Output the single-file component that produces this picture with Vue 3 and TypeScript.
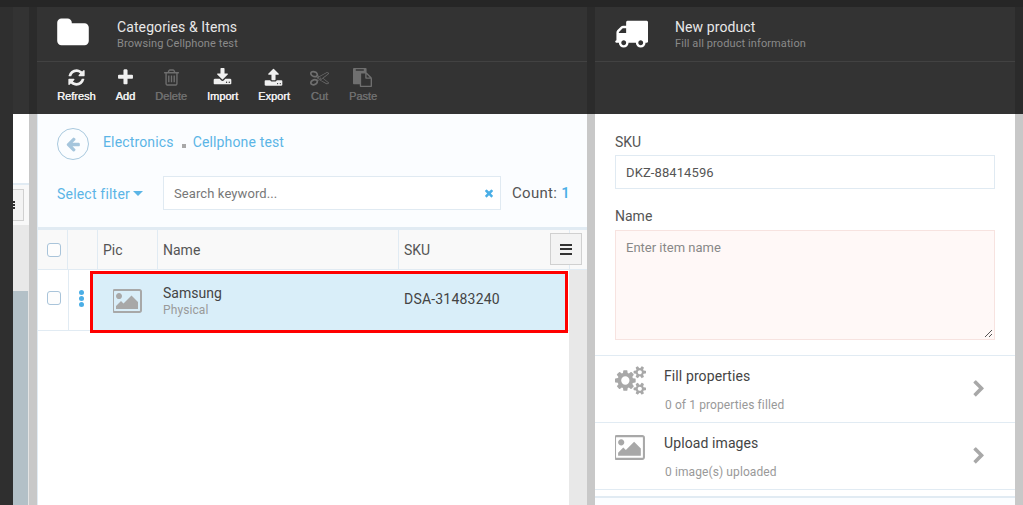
<script setup lang="ts">
const icons: Record<string, string> = {
  folder: 'M1728 608v704q0 92-66 158t-158 66h-1216q-92 0-158-66t-66-158v-960q0-92 66-158t158-66h320q92 0 158 66t66 158v32h672q92 0 158 66t66 158z',
  refresh: 'M1639 1056q0 5-1 7-64 268-268 434.5t-478 166.5q-146 0-282.5-55t-243.5-157l-129 129q-19 19-45 19t-45-19-19-45v-448q0-26 19-45t45-19h448q26 0 45 19t19 45-19 45l-137 137q71 66 161 102t187 36q134 0 250-65t186-179q11-17 53-117 8-23 30-23h192q13 0 22.5 9.5t9.5 22.5zm25-800v448q0 26-19 45t-45 19h-448q-26 0-45-19t-19-45 19-45l138-138q-148-137-349-137-134 0-250 65t-186 179q-11 17-53 117-8 23-30 23h-199q-13 0-22.5-9.5t-9.5-22.5v-7q65-268 270-434.5t480-166.5q146 0 284 55.5t245 156.5l130-129q19-19 45-19t45 19 19 45z',
  plus: 'M1600 736v192q0 40-28 68t-68 28h-416v416q0 40-28 68t-68 28h-192q-40 0-68-28t-28-68v-416h-416q-40 0-68-28t-28-68v-192q0-40 28-68t68-28h416v-416q0-40 28-68t68-28h192q40 0 68 28t28 68v416h416q40 0 68 28t28 68z',
  trash: 'M704 736v576q0 14-9 23t-23 9h-64q-14 0-23-9t-9-23v-576q0-14 9-23t23-9h64q14 0 23 9t9 23zm256 0v576q0 14-9 23t-23 9h-64q-14 0-23-9t-9-23v-576q0-14 9-23t23-9h64q14 0 23 9t9 23zm256 0v576q0 14-9 23t-23 9h-64q-14 0-23-9t-9-23v-576q0-14 9-23t23-9h64q14 0 23 9t9 23zm128 724v-948h-896v948q0 22 7 40.5t14.5 27 10.5 8.5h832q3 0 10.5-8.5t14.5-27 7-40.5zm-672-1076h448l-48-117q-7-9-17-11h-317q-10 2-17 11zm928 32v64q0 14-9 23t-23 9h-96v948q0 83-47 143.5t-113 60.5h-832q-66 0-113-58.5t-47-141.5v-952h-96q-14 0-23-9t-9-23v-64q0-14 9-23t23-9h309l70-167q15-37 54-63t79-26h320q40 0 79 26t54 63l70 167h309q14 0 23 9t9 23z',
  download: 'M1344 1344q0-26-19-45t-45-19-45 19-19 45 19 45 45 19 45-19 19-45zm256 0q0-26-19-45t-45-19-45 19-19 45 19 45 45 19 45-19 19-45zm128-224v320q0 40-28 68t-68 28h-1472q-40 0-68-28t-28-68v-320q0-40 28-68t68-28h465l135 136q58 56 136 56t136-56l136-136h464q40 0 68 28t28 68zm-325-569q17 41-14 70l-448 448q-18 19-45 19t-45-19l-448-448q-31-29-14-70 17-39 59-39h256v-448q0-26 19-45t45-19h256q26 0 45 19t19 45v448h256q42 0 59 39z',
  upload: 'M1344 1472q0-26-19-45t-45-19-45 19-19 45 19 45 45 19 45-19 19-45zm256 0q0-26-19-45t-45-19-45 19-19 45 19 45 45 19 45-19 19-45zm128-224v320q0 40-28 68t-68 28h-1472q-40 0-68-28t-28-68v-320q0-40 28-68t68-28h427q21 56 70.5 92t110.5 36h256q61 0 110.5-36t70.5-92h427q40 0 68 28t28 68zm-325-648q-17 40-59 40h-256v448q0 26-19 45t-45 19h-256q-26 0-45-19t-19-45v-448h-256q-42 0-59-40-17-39 14-69l448-448q18-19 45-19t45 19l448 448q31 30 14 69z',
  cut: 'M960 896q26 0 45 19t19 45-19 45-45 19-45-19-19-45 19-45 45-19zm300 64l507 398q28 20 25 56-5 35-35 51l-128 64q-13 7-29 7-17 0-31-8l-690-387-110 66q-8 4-12 5 14 49 10 97-7 77-56 147.5t-132 123.5q-132 84-277 84-136 0-222-78-90-84-79-207 7-76 56-147t131-124q132-84 278-84 83 0 151 31 9-13 22-22l122-73-122-73q-13-9-22-22-68 31-151 31-146 0-278-84-82-53-131-124t-56-147q-5-59 15.5-113t63.5-93q85-79 222-79 145 0 277 84 83 52 132 123t56 148q4 48-10 97 4 1 12 5l110 66 690-387q14-8 31-8 16 0 29 7l128 64q30 16 35 51 3 36-25 56zm-681-260q46-42 21-108t-106-117q-92-59-192-59-74 0-113 36-46 42-21 108t106 117q92 59 192 59 74 0 113-36zm-85 745q81-51 106-117t-21-108q-39-36-113-36-100 0-192 59-81 51-106 117t21 108q39 36 113 36 100 0 192-59zm178-613l96 58v-11q0-36 33-56l14-8-79-47-26 26q-3 3-10 11t-12 12q-2 2-4 3.5t-3 2.5zm224 224l96 32 736-576-128-64-768 431v113l-160 96 9 8q2 2 7 6 4 4 11 12t11 12l26 26zm704 416l128-64-520-408-177 138q-2 3-13 7z',
  paste: 'M768 1664h896v-640h-416q-40 0-68-28t-28-68v-416h-384v1152zm256-1440v-64q0-13-9.5-22.5t-22.5-9.5h-704q-13 0-22.5 9.5t-9.5 22.5v64q0 13 9.5 22.5t22.5 9.5h704q13 0 22.5-9.5t9.5-22.5zm256 672h299l-299-299v299zm512 128v672q0 40-28 68t-68 28h-960q-40 0-68-28t-28-68v-160h-544q-40 0-68-28t-28-68v-1344q0-40 28-68t68-28h1088q40 0 68 28t28 68v328q21 13 36 28l408 408q28 28 48 76t20 88z',
  truck: 'M640 1408q0-52-38-90t-90-38-90 38-38 90 38 90 90 38 90-38 38-90zm-384-512h384v-256h-158q-13 0-22 9l-195 195q-9 9-9 22v30zm1280 512q0-52-38-90t-90-38-90 38-38 90 38 90 90 38 90-38 38-90zm256-1088v1024q0 15-4 26.5t-13.5 18.5-16.5 11.5-23.5 6-22.5 2-25.5 0-22.5-.5q0 106-75 181t-181 75-181-75-75-181h-384q0 106-75 181t-181 75-181-75-75-181h-64q-3 0-22.5.5t-25.5 0-22.5-2-23.5-6-16.5-11.5-13.5-18.5-4-26.5q0-26 19-45t45-19v-320q0-8-.5-35t0-38 2.5-34.5 6.5-37 14-30.5 22.5-30l198-198q19-19 50.5-32t58.5-13h160v-192q0-26 19-45t45-19h1024q26 0 45 19t19 45z',
  picture: 'M576 576q0 80-56 136t-136 56-136-56-56-136 56-136 136-56 136 56 56 136zm1024 384v448h-1408v-192l320-320 160 160 512-512zm96-704h-1600q-13 0-22.5 9.5t-9.5 22.5v1216q0 13 9.5 22.5t22.5 9.5h1600q13 0 22.5-9.5t9.5-22.5v-1216q0-13-9.5-22.5t-22.5-9.5zm160 32v1216q0 66-47 113t-113 47h-1600q-66 0-113-47t-47-113v-1216q0-66 47-113t113-47h1600q66 0 113 47t47 113z',
  cogs: 'M896 896q0-106-75-181t-181-75-181 75-75 181 75 181 181 75 181-75 75-181zm768 512q0-52-38-90t-90-38-90 38-38 90q0 53 37.5 90.5t90.5 37.5 90.5-37.5 37.5-90.5zm0-1024q0-52-38-90t-90-38-90 38-38 90q0 53 37.5 90.5t90.5 37.5 90.5-37.5 37.5-90.5zm-384 421v185q0 10-7 19.5t-16 10.5l-155 24q-11 35-32 76 34 48 90 115 7 11 7 20 0 12-7 19-23 30-82.5 89.5t-78.5 59.5q-11 0-21-7l-115-90q-37 19-77 31-11 108-23 155-7 24-30 24h-186q-11 0-20-7.5t-10-17.5l-23-153q-34-10-75-31l-118 89q-7 7-20 7-11 0-21-8-144-133-144-160 0-9 7-19 10-14 41-53t47-61q-23-44-35-82l-152-24q-10-1-17-9.5t-7-19.5v-185q0-10 7-19.5t16-10.5l155-24q11-35 32-76-34-48-90-115-7-11-7-20 0-12 7-20 22-30 82-89t79-59q11 0 21 7l115 90q34-18 77-32 11-108 23-154 7-24 30-24h186q11 0 20 7.5t10 17.5l23 153q34 10 75 31l118-89q8-7 20-7 11 0 21 8 144 133 144 160 0 8-7 19-12 16-42 54t-45 60q23 48 34 82l152 23q10 2 17 10.5t7 19.5zm640 533v140q0 16-149 31-12 27-30 52 51 113 51 138 0 4-4 7-122 71-124 71-8 0-46-47t-52-68q-20 2-30 2t-30-2q-14 21-52 68t-46 47q-2 0-124-71-4-3-4-7 0-25 51-138-18-25-30-52-149-15-149-31v-140q0-16 149-31 13-29 30-52-51-113-51-138 0-4 4-7 4-2 35-20t59-34 30-16q8 0 46 46.5t52 67.5q20-2 30-2t30 2q51-71 92-112l6-2q4 0 124 70 4 3 4 7 0 25-51 138 17 23 30 52 149 15 149 31zm0-1024v140q0 16-149 31-12 27-30 52 51 113 51 138 0 4-4 7-122 71-124 71-8 0-46-47t-52-68q-20 2-30 2t-30-2q-14 21-52 68t-46 47q-2 0-124-71-4-3-4-7 0-25 51-138-18-25-30-52-149-15-149-31v-140q0-16 149-31 13-29 30-52-51-113-51-138 0-4 4-7 4-2 35-20t59-34 30-16q8 0 46 46.5t52 67.5q20-2 30-2t30 2q51-71 92-112l6-2q4 0 124 70 4 3 4 7 0 25-51 138 17 23 30 52 149 15 149 31z',
  chevron: 'M1363 877l-742 742q-19 19-45 19t-45-19l-166-166q-19-19-19-45t19-45l531-531-531-531q-19-19-19-45t19-45l166-166q19-19 45-19t45 19l742 742q19 19 19 45t-19 45z',
  arrowLeft: 'M1664 896v128q0 53-32.5 90.5t-84.5 37.5h-704l293 294q38 36 38 90t-38 90l-75 76q-37 37-90 37-52 0-91-37l-651-652q-37-37-37-90 0-52 37-91l651-650q38-38 91-38 52 0 90 38l75 74q38 38 38 91t-38 91l-293 293h704q52 0 84.5 37.5t32.5 90.5z',
  times: 'M1490 1322q0 40-28 68l-136 136q-28 28-68 28t-68-28l-294-294-294 294q-28 28-68 28t-68-28l-136-136q-28-28-28-68t28-68l294-294-294-294q-28-28-28-68t28-68l136-136q28-28 68-28t68 28l294 294 294-294q28-28 68-28t68 28l136 136q28 28 28 68t-28 68l-294 294 294 294q28 28 28 68z',
}

const tools = [
  { label: 'Refresh', icon: 'refresh', off: false },
  { label: 'Add', icon: 'plus', off: false },
  { label: 'Delete', icon: 'trash', off: true },
  { label: 'Import', icon: 'download', off: false },
  { label: 'Export', icon: 'upload', off: false },
  { label: 'Cut', icon: 'cut', off: true },
  { label: 'Paste', icon: 'paste', off: true },
]

const sections = [
  { title: 'Fill properties', sub: '0 of 1 properties filled', icon: 'cogs' },
  { title: 'Upload images', sub: '0 image(s) uploaded', icon: 'picture' },
]
</script>

<template>
  <div class="app">
    <div class="dark-edge"></div>

    <aside class="stub">
      <div class="dark-head"></div>
      <div class="stub-top"></div>
      <div class="stub-bar"><span class="stub-btn"><i></i><i></i><i></i></span></div>
      <div class="stub-grey"></div>
      <div class="stub-slate"></div>
    </aside>
    <div class="gutter"><div class="dark-gutter"></div></div>

    <main class="panel">
      <header class="head">
        <svg class="head-icon" viewBox="0 0 1792 1792"><path :d="icons.folder" /></svg>
        <div class="head-text">
          <div class="head-title">Categories &amp; Items</div>
          <div class="head-sub">Browsing Cellphone test</div>
        </div>
      </header>
      <nav class="tools">
        <div v-for="t in tools" :key="t.label" class="tool" :class="{ off: t.off }">
          <svg viewBox="0 0 1792 1792"><path :d="icons[t.icon]" /></svg>
          <span>{{ t.label }}</span>
        </div>
      </nav>

      <section class="browse">
        <div class="crumbs">
          <span class="back">
            <svg viewBox="0 0 1792 1792"><path :d="icons.arrowLeft" /></svg>
          </span>
          <a>Electronics</a>
          <i class="dot"></i>
          <a>Cellphone test</a>
        </div>
        <div class="filters">
          <a class="filter">Select filter<i class="caret"></i></a>
          <div class="search">
            <span>Search keyword...</span>
            <svg viewBox="0 0 1792 1792"><path :d="icons.times" /></svg>
          </div>
          <div class="count">Count: <b>1</b></div>
        </div>
      </section>

      <section class="table">
        <div class="thead">
          <div class="c-check"><span class="box"></span></div>
          <div class="c-menu"></div>
          <div class="c-pic">Pic</div>
          <div class="c-name">Name</div>
          <div class="c-sku">SKU</div>
          <button class="bars" type="button"><i></i><i></i><i></i></button>
        </div>
        <div class="tbody">
          <div class="rows">
            <div class="row">
              <div class="c-check"><span class="box"></span></div>
              <div class="c-menu kebab"><i></i><i></i><i></i></div>
              <div class="selected">
                <svg class="thumb" viewBox="0 0 1920 1792"><path :d="icons.picture" /></svg>
                <div class="item-name">
                  <div>Samsung</div>
                  <small>Physical</small>
                </div>
                <div class="item-sku">DSA-31483240</div>
              </div>
            </div>
          </div>
          <div class="scroll"></div>
        </div>
      </section>
    </main>
    <div class="gutter"><div class="dark-gutter"></div></div>

    <section class="panel">
      <header class="head">
        <svg class="head-icon" viewBox="0 0 1792 1792"><path :d="icons.truck" /></svg>
        <div class="head-text">
          <div class="head-title">New product</div>
          <div class="head-sub">Fill all product information</div>
        </div>
      </header>
      <div class="tools tools-empty"></div>

      <form class="form">
        <label>SKU</label>
        <div class="input">DKZ-88414596</div>
        <label>Name</label>
        <div class="textarea">
          <span>Enter item name</span>
          <svg class="grip" viewBox="0 0 10 10"><path d="M9 2 2 9M9 6 6 9" /></svg>
        </div>
      </form>

      <div v-for="s in sections" :key="s.title" class="section">
        <svg class="sec-icon" viewBox="0 0 1920 1792"><path :d="icons[s.icon]" /></svg>
        <div class="sec-text">
          <div class="sec-title">{{ s.title }}</div>
          <div class="sec-sub">{{ s.sub }}</div>
        </div>
        <svg class="sec-chev" viewBox="0 0 1792 1792"><path :d="icons.chevron" /></svg>
      </div>
      <div class="section-end"></div>
      <div class="form-end"></div>
    </section>
    <div class="gutter"><div class="dark-gutter"></div></div>
  </div>
</template>

<style>
html, body { margin: 0; overflow: hidden; }
</style>

<style scoped>
.app {
  width: 1023px;
  height: 505px;
  overflow: hidden;
  display: grid;
  grid-template-columns: 13px 16px 8px 550px 8px 420px 8px;
  font-family: Roboto, "Open Sans", sans-serif;
  background: #c8c8c8;
  color: #444;
}
.dark-edge { background: #2f2f2f; border-top: 7px solid #262626; }
.gutter { background: #c8c8c8; }
.dark-gutter { height: 114px; background: #2b2b2b; border-top: 7px solid #262626; box-sizing: border-box; }

.stub { display: flex; flex-direction: column; background: #fff; overflow: hidden; }
.dark-head { height: 114px; background: #333; border-top: 7px solid #262626; box-sizing: border-box; flex: none; }
.stub-top { height: 69px; background: #fff; flex: none; }
.stub-bar { height: 42px; box-sizing: border-box; background: #f8f8f8; border-top: 2px solid #e1ebf3; flex: none; display: flex; padding-top: 4px; }
.stub-btn { width: 11px; height: 32px; box-sizing: border-box; border: 1px solid #d0d0d0; border-left: 0; background: #f3f3f3; display: flex; flex-direction: column; justify-content: center; gap: 1px; }
.stub-btn i { width: 2px; height: 2px; background: #333; }
.stub-grey { height: 66px; background: #e8e8e8; flex: none; }
.stub-slate { flex: 1; background: #b3c0c7; border-right: 1px solid #e4e4e4; }

.panel { display: flex; flex-direction: column; background: #fff; min-width: 0; height: 505px; overflow: hidden; }
.head {
  height: 54px;
  flex: none;
  border-top: 7px solid #262626;
  border-bottom: 1px solid #424242;
  background: #333;
  display: flex;
  align-items: center;
  padding-left: 19px;
  gap: 27px;
}
.head-icon { width: 34px; height: 34px; fill: #fff; flex: none; margin-top: -3px; }
.head-text { margin-top: 2px; }
.head-title { font-size: 14px; line-height: 18px; color: #e8e8e8; letter-spacing: 0.1px; }
.head-sub { font-size: 11px; line-height: 16px; color: #8a8a8a; letter-spacing: 0.1px; }

.tools {
  height: 52px;
  flex: none;
  background: #333;
  display: flex;
  gap: 20px;
  padding-left: 20px;
}
.tools-empty { gap: 0; }
.tool { display: flex; flex-direction: column; align-items: center; color: #f0f0f0; padding-top: 6px; }
.tool.off { color: #6f6f6f; }
.tool svg { width: 19px; height: 19px; fill: currentColor; }
.tool span { font: 11px/14px "Liberation Sans", Arial, sans-serif; margin-top: 2px; text-shadow: 0.4px 0 0 currentColor; }

.browse { height: 113px; flex: none; background: #fbfdff; box-sizing: border-box; padding: 14px 16px 0 19px; border-left: 1px solid #e1ebf3; }
.crumbs { display: flex; align-items: center; height: 32px; font-size: 14px; color: #5bb5e6; letter-spacing: 0.15px; }
.crumbs a { margin-top: -4px; }
.back { width: 32px; height: 32px; box-sizing: border-box; border: 1px solid #a9c9de; border-radius: 50%; display: flex; align-items: center; justify-content: center; margin-right: 14px; }
.back svg { width: 16px; height: 16px; fill: #a5c5dc; }
.dot { width: 4px; height: 4px; background: #a8a8a8; margin: 3px 7px 0 8px; }
.filters { display: flex; align-items: center; margin-top: 16px; height: 34px; }
.filter { width: 106px; flex: none; font-size: 14px; color: #5bb5e6; display: flex; align-items: center; letter-spacing: 0.2px; padding-top: 2px; box-sizing: border-box; }
.caret { border: 5px solid transparent; border-top-color: #5bb5e6; border-bottom: 0; margin: 0 0 2px 3px; }
.search {
  width: 338px;
  height: 34px;
  flex: none;
  box-sizing: border-box;
  background: #fff;
  border: 1px solid #e0eaf2;
  display: flex;
  align-items: center;
  justify-content: space-between;
  padding: 0 5px 0 10px;
  font-size: 13px;
  color: #777;
  letter-spacing: 0.1px;
}
.search svg { width: 12px; height: 12px; fill: #4aaee6; }
.count { margin-left: 11px; font-size: 15px; color: #555; white-space: nowrap; letter-spacing: 0.3px; }
.count b { font-weight: 500; color: #4aaee6; }

.table { flex: 1; display: flex; flex-direction: column; background: #fff; border-left: 1px solid #e1ebf3; }
.thead {
  height: 39px;
  flex: none;
  position: relative;
  display: flex;
  background: #f9f9f9;
  border-top: 3px solid #e1ebf3;
  border-bottom: 1px solid #e1ebf3;
  font-size: 14px;
  color: #555;
}
.thead > div { display: flex; align-items: center; border-right: 1px solid #e1ebf3; box-sizing: border-box; padding-left: 5px; }
.c-check { width: 30px; flex: none; display: flex; align-items: center; justify-content: center; }
.thead .c-check { padding-left: 2px; justify-content: center; }
.c-menu { width: 30px; flex: none; }
.c-pic { width: 60px; }
.c-name { width: 241px; }
.c-sku { width: 171px; }
.box { width: 14px; height: 14px; box-sizing: border-box; border: 1px solid #a9c4da; border-radius: 3px; background: #fdfdfd; }
.bars {
  position: absolute;
  right: 5px;
  top: 3px;
  width: 32px;
  height: 32px;
  padding: 0;
  border: 1px solid #d0d0d0;
  background: #f3f3f3;
  display: flex;
  flex-direction: column;
  align-items: center;
  justify-content: center;
  gap: 2.5px;
}
.bars i { width: 12px; height: 2px; background: #333; }

.tbody { flex: 1; display: flex; }
.rows { flex: 1; }
.scroll { width: 18px; background: #e8e8e8; flex: none; }
.row { display: flex; height: 60px; border-bottom: 1px solid #e1ebf3; }
.row .c-check, .row .c-menu { border-right: 1px solid #e1ebf3; box-sizing: border-box; }
.row .c-check { width: 31px; padding: 0 0 5px 1px; }
.kebab { display: flex; flex-direction: column; align-items: center; justify-content: center; gap: 1px; width: 21px !important; padding: 0 0 4px 3px; border-right: 0 !important; }
.kebab i { width: 5px; height: 5px; border-radius: 50%; background: #4aaee6; }
.selected {
  flex: 1;
  margin: 1px 1px 0 0;
  height: 62px;
  box-sizing: border-box;
  border: 3px solid #ff0000;
  background: #d9eef9;
  display: flex;
  align-items: center;
  position: relative;
  z-index: 1;
}
.thumb { width: 30px; height: 28px; fill: #a8a8a8; margin: -2px 0 0 20px; flex: none; }
.item-name { width: 241px; margin: -3px 0 0 20px; font-size: 14px; color: #444; line-height: 18px; }
.item-name small { display: block; font-size: 12px; line-height: 16px; color: #9a9a9a; letter-spacing: 0.1px; }
.item-sku { font-size: 14px; color: #444; margin-top: -7px; letter-spacing: 0.2px; }

.form { flex: none; height: 241px; box-sizing: border-box; padding: 18px 20px 0; background: #fff; }
.form label { display: block; font-size: 14px; line-height: 20px; color: #555; margin-bottom: 3px; }
.input {
  height: 34px;
  box-sizing: border-box;
  border: 1px solid #e0eaf2;
  font-size: 13px;
  line-height: 33px;
  padding-left: 10px;
  color: #555;
  margin-bottom: 17px;
  letter-spacing: 0.1px;
}
.textarea {
  height: 110px;
  box-sizing: border-box;
  border: 1px solid #f7e3e0;
  background: #fff8f7;
  font-size: 13px;
  padding: 9px 10px;
  color: #888;
  position: relative;
  margin-top: 4px;
}
.grip { position: absolute; right: 1px; bottom: 1px; width: 10px; height: 10px; fill: none; stroke: #555; stroke-width: 1; }

.section {
  height: 67px;
  box-sizing: border-box;
  flex: none;
  border-top: 1px solid #e1ebf3;
  display: flex;
  padding-left: 20px;
  position: relative;
}
.sec-icon { width: 31px; height: 29px; fill: #a8a8a8; margin-top: 10px; flex: none; }
.sec-text { margin-left: 18px; }
.sec-title { font-size: 14px; line-height: 18px; margin-top: 11px; color: #444; letter-spacing: 0.1px; }
.sec-sub { font-size: 12px; line-height: 16px; margin-top: 12px; margin-left: 1px; color: #999; letter-spacing: 0.1px; }
.sec-chev { position: absolute; right: 27px; top: 24px; width: 18px; height: 18px; fill: #a8a8a8; }
.section-end { height: 7px; flex: none; border-top: 1px solid #e1ebf3; box-sizing: border-box; }
.form-end { flex: 1; border-top: 2px solid #e1ebf3; background: #fbfdff; }
</style>
